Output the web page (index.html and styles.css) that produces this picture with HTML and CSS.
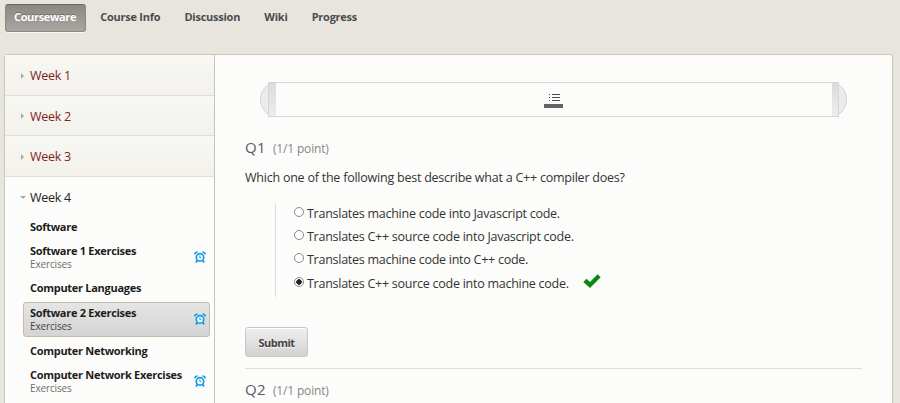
FILE: index.html
```html
<!DOCTYPE html>
<html lang="en">
<head>
<meta charset="utf-8">
<title>Courseware</title>
<link rel="stylesheet" href="styles.css">
</head>
<body>
<svg width="0" height="0" class="defs">
  <symbol id="alarm" viewBox="0 0 12 12">
    <circle cx="6" cy="6.4" r="3.7" fill="#fff" stroke="#0f9be6" stroke-width="1.7"/>
    <path d="M5.9 4.4V6.7H7.3" fill="none" stroke="#0f9be6" stroke-width="1"/>
    <path d="M.7 3.4C1 1.8 1.8 1 3.6 1M8.4 1C10.2 1 11 1.8 11.3 3.4" stroke="#0f9be6" stroke-width="1.6" fill="none"/>
    <path d="M3.3 9.3 2 11.5M8.7 9.3 10 11.5" stroke="#0f9be6" stroke-width="1.8" fill="none"/>
  </symbol>
</svg>
<nav class="tabs">
  <a class="tab active">Courseware</a>
  <a class="tab">Course Info</a>
  <a class="tab">Discussion</a>
  <a class="tab">Wiki</a>
  <a class="tab">Progress</a>
</nav>
<div class="container">
  <aside class="sidebar">
    <h3 class="week"><i class="arrow"></i><span>Week 1</span></h3>
    <h3 class="week"><i class="arrow"></i><span>Week 2</span></h3>
    <h3 class="week"><i class="arrow"></i><span>Week 3</span></h3>
    <h3 class="week open"><i class="arrow"></i><span>Week 4</span></h3>
    <ul class="lessons">
      <li class="lesson"><p>Software</p></li>
      <li class="lesson graded"><div><p>Software 1 Exercises</p><small>Exercises</small></div><svg class="alarm"><use href="#alarm"/></svg></li>
      <li class="lesson"><p>Computer Languages</p></li>
      <li class="lesson graded current"><div><p>Software 2 Exercises</p><small>Exercises</small></div><svg class="alarm"><use href="#alarm"/></svg></li>
      <li class="lesson"><p>Computer Networking</p></li>
      <li class="lesson graded"><div><p>Computer Network Exercises</p><small>Exercises</small></div><svg class="alarm"><use href="#alarm"/></svg></li>
    </ul>
  </aside>
  <main class="content">
    <div class="sequence">
      <svg class="knob" viewBox="0 0 8 31"><path d="M8 1C-2 8-2 23 8 30" fill="#ececec" stroke="#d0d0d0"/></svg>
      <div class="track">
        <span class="cap cap-left"></span>
        <svg class="list-icon" viewBox="0 0 20 15" shape-rendering="crispEdges">
          <path d="M5 .5h1M5 3.5h1M5 6.5h1M8 .5h8M8 3.5h8M8 6.5h8" stroke="#4c4c4c" stroke-width="1"/>
          <path d="M0 10h19v4H0z" fill="#636363"/>
        </svg>
        <span class="cap cap-right"></span>
      </div>
      <svg class="knob" viewBox="0 0 8 31"><path d="M0 1C10 8 10 23 0 30" fill="#ececec" stroke="#d0d0d0"/></svg>
    </div>
    <h2 class="title"><span class="q">Q1</span><span class="points">(1/1 point)</span></h2>
    <p class="question">Which one of the following best describe what a C++ compiler does?</p>
    <div class="choices">
      <label class="choice"><i class="radio"></i><span>Translates machine code into Javascript code.</span></label>
      <label class="choice"><i class="radio"></i><span>Translates C++ source code into Javascript code.</span></label>
      <label class="choice"><i class="radio"></i><span>Translates machine code into C++ code.</span></label>
      <label class="choice"><i class="radio checked"></i><span>Translates C++ source code into machine code.</span>
        <svg class="check" viewBox="0 0 18 15"><path d="M.3 8 3.5 4.7 7 8 14.6.3 17.7 3.3 7 14z" fill="#098a0c"/></svg>
      </label>
    </div>
    <button class="submit">Submit</button>
    <h2 class="title second"><span class="q">Q2</span><span class="points">(1/1 point)</span></h2>
  </main>
</div>
</body>
</html>
```
FILE: styles.css
```css
* { box-sizing: border-box; margin: 0; padding: 0; }
html { overflow: hidden; }
body { height: 403px; overflow: hidden; background: #e8e5df; font-family: "Open Sans", sans-serif; color: #333; }
.defs { display: block; }
.tabs { display: flex; height: 54px; padding: 4px 0 0 5px; }
.tab { height: 28px; padding: 0 10px 0 9px; margin-right: 5.2px; font-size: 11px; letter-spacing: -.25px; line-height: 26px; font-weight: 700; color: #4b4b4b; white-space: nowrap; }
.tab.active { width: 81px; border: 1px solid #8b8884; border-top-color: #686868; border-radius: 3px; background: linear-gradient(#8b8884, #aaa6a2); color: #fff; line-height: 24px; padding: 0 0 0 8px; box-shadow: 0 1px 0 #f7f6f3; text-shadow: 0 -1px 0 rgba(0,0,0,.3); letter-spacing: -.35px; }
.container { display: flex; width: 888px; height: 365px; margin-left: 4px; border: 1px solid #cbc6b7; border-radius: 3px; background: #fcfcfa; width: 889px; }
.sidebar { flex: none; width: 210px; border-right: 1px solid #c9c4b8; }
.week { display: flex; align-items: center; height: 40.5px; padding: 2px 0 0 16px; border-bottom: 1px solid #dedede; background: linear-gradient(#f8f8f4, #f2f1ec); font-size: 12.5px; letter-spacing: -.28px; font-weight: 400; color: #7e1f1b; }
.arrow { flex: none; width: 0; height: 0; border-left: 3px solid #aaa; border-top: 3px solid transparent; border-bottom: 3px solid transparent; margin-right: 6px; }
.week.open { background: none; border: 0; color: #222; padding-top: 1px; }
.open .arrow { border: 3px solid transparent; border-top: 3px solid #aaa; border-bottom: 0; margin: 0 4px 0 -1px; }
.lessons { list-style: none; margin-top: -3px; padding-left: 18px; }
.lesson { display: flex; align-items: center; height: 25px; width: 187px; padding-left: 7px; color: #1c1c1c; }
.lesson p { font-size: 11px; letter-spacing: -.29px; font-weight: 700; line-height: 15px; white-space: nowrap; }
.lesson small { display: block; font-size: 10px; letter-spacing: -.15px; line-height: 13px; color: #6c6c6c; }
.graded { height: 36px; justify-content: space-between; padding-right: 4px; }
.current { height: 35px; margin: 2px 0 1px; padding: 0 3px 2px 6px; border: 1px solid #c5bdac; border-radius: 3px; background: linear-gradient(#e5e5e4, #d4d4d4); }
.current small { color: #444; }
.alarm { flex: none; width: 12px; height: 12px; }
.content { flex: 1; padding: 27px 30px 0; }
.sequence { display: flex; align-items: center; height: 35px; margin: 0 15px; }
.knob { flex: none; width: 8px; height: 31px; }
.track { display: flex; flex: 1; align-items: center; justify-content: space-between; height: 35px; border: 1px solid #d6d6d6; }
.cap { width: 7px; height: 33px; background: linear-gradient(#dcdada, #ededed); }
.cap-right { width: 6px; }
.list-icon { width: 20px; height: 15px; margin-top: 3px; }
.title { display: flex; align-items: baseline; height: 24px; margin-top: 18px; line-height: 24px; font-weight: 400; }
.q { width: 28px; font-size: 15px; letter-spacing: .3px; color: #5b5b5b; }
.points { font-size: 12px; letter-spacing: -.17px; color: #868686; }
.question { margin-top: 9px; font-size: 12.5px; letter-spacing: -.23px; line-height: 20px; white-space: nowrap; }
.choices { height: 94px; margin: 15px 0 0 30px; padding: 0 0 0 18px; border-left: 1px solid #ddd; }
.choice { display: flex; align-items: center; height: 23.3px; font-size: 12.5px; letter-spacing: -.26px; white-space: nowrap; }
.radio { flex: none; width: 10px; height: 10px; margin: -6px 3px 0 0; border: 1px solid #8a8a8a; border-radius: 50%; background: #fff; }
.radio.checked { background: radial-gradient(circle, #222 0 2.5px, #fff 3px); }
.choice span { line-height: 20px; padding-bottom: 2px; }
.check { width: 18px; height: 15px; margin: -6px 0 0 14px; }
.submit { display: block; width: 63px; height: 30px; margin: 30px 0 11px; border: 1px solid #c9c6c6; border-radius: 3px; background: linear-gradient(#efefef, #d5d1d1); box-shadow: inset 0 1px 0 #fff; font: 700 11px "Open Sans", sans-serif; letter-spacing: -.5px; color: #444; text-shadow: 0 1px 0 #f8f8f8; }
.second { margin-top: 0; padding-top: 8px; border-top: 1px solid #ddd; height: 36px; }
```
